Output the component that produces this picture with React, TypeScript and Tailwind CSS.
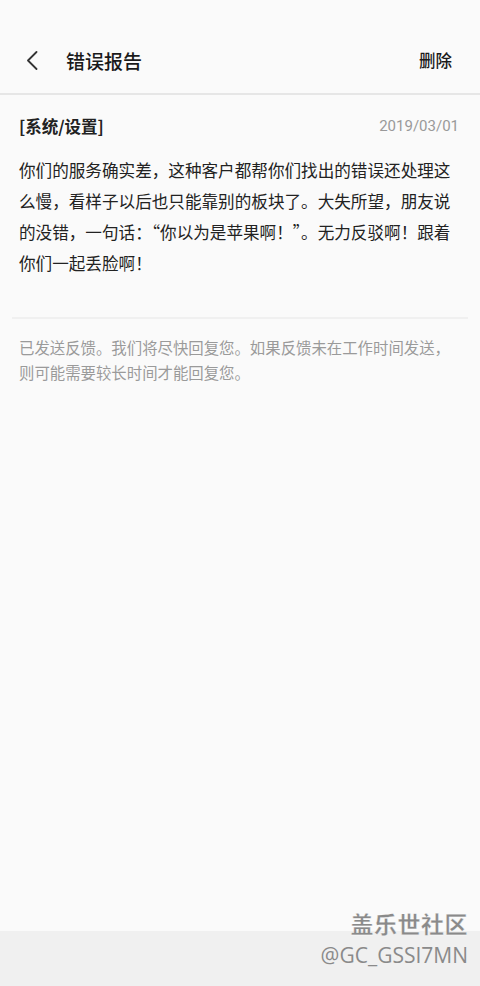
import React from 'react';

const cjk = { fontFamily: '"Noto Sans CJK SC", "Noto Sans", sans-serif' };

const App: React.FC = () => {
  return (
    <div className="flex min-h-[986px] w-[480px] flex-col bg-[#fafafa]" style={cjk}>
      {/* header */}
      <div className="flex h-[93px] items-end pb-[23px]">
        <div className="flex w-full items-center pl-[26px] pr-[28px]">
          <svg width="12" height="19" viewBox="0 0 12 19" className="shrink-0">
            <path d="M10.5 1 L2 9.5 L10.5 18" fill="none" stroke="#333" strokeWidth="1.8" strokeLinecap="round" strokeLinejoin="round" />
          </svg>
          <h1 className="ml-[28px] text-[19px] font-medium leading-none text-[#1a1a1a]">错误报告</h1>
          <span className="ml-auto text-[16.5px] font-medium leading-none text-[#1a1a1a]">删除</span>
        </div>
      </div>
      <div className="h-[2px] bg-[#e6e6e6]" />

      {/* feedback */}
      <div className="pl-[19px] pr-[21px] pt-[19px]">
        <div className="flex items-center justify-between">
          <span className="text-[16.5px] font-bold leading-[24px] text-[#222]">[系统/设置]</span>
          <span className="text-[15px] leading-[24px] text-[#999]" style={{ fontFamily: 'Roboto, sans-serif' }}>
            2019/03/01
          </span>
        </div>
        <p className="mt-[17px] text-[16.6px] leading-[31px] text-[#222]">
          你们的服务确实差，这种客户都帮你们找出的错误还处理这么慢，看样子以后也只能靠别的板块了。大失所望，朋友说的没错，一句话：“你以为是苹果啊！”。无力反驳啊！跟着你们一起丢脸啊！
        </p>
      </div>

      <div className="mx-[12px] mt-[38px] h-[2px] bg-[#f0f0f0]" />

      <p className="pl-[19px] pr-[21px] pt-[16px] text-[15.4px] leading-[25px] text-[#9a9a9a]">
        已发送反馈。我们将尽快回复您。如果反馈未在工作时间发送，则可能需要较长时间才能回复您。
      </p>

      <div className="flex-1" />

      {/* bottom bar with watermark */}
      <div className="relative h-[55px] bg-[#f0f0f0]">
        <div className="absolute bottom-[20px] right-[12px] flex flex-col items-end leading-none text-[#8a8a8a]">
          <span className="text-[23px] font-bold leading-[26px] tracking-[0.5px]" style={{ WebkitTextStroke: '0.3px #fff' }}>
            盖乐世社区
          </span>
          <span className="mt-[8px] text-[21px] leading-[22px]" style={{ fontFamily: '"Open Sans", sans-serif' }}>
            @GC_GSSI7MN
          </span>
        </div>
      </div>
    </div>
  );
};

export default App;
